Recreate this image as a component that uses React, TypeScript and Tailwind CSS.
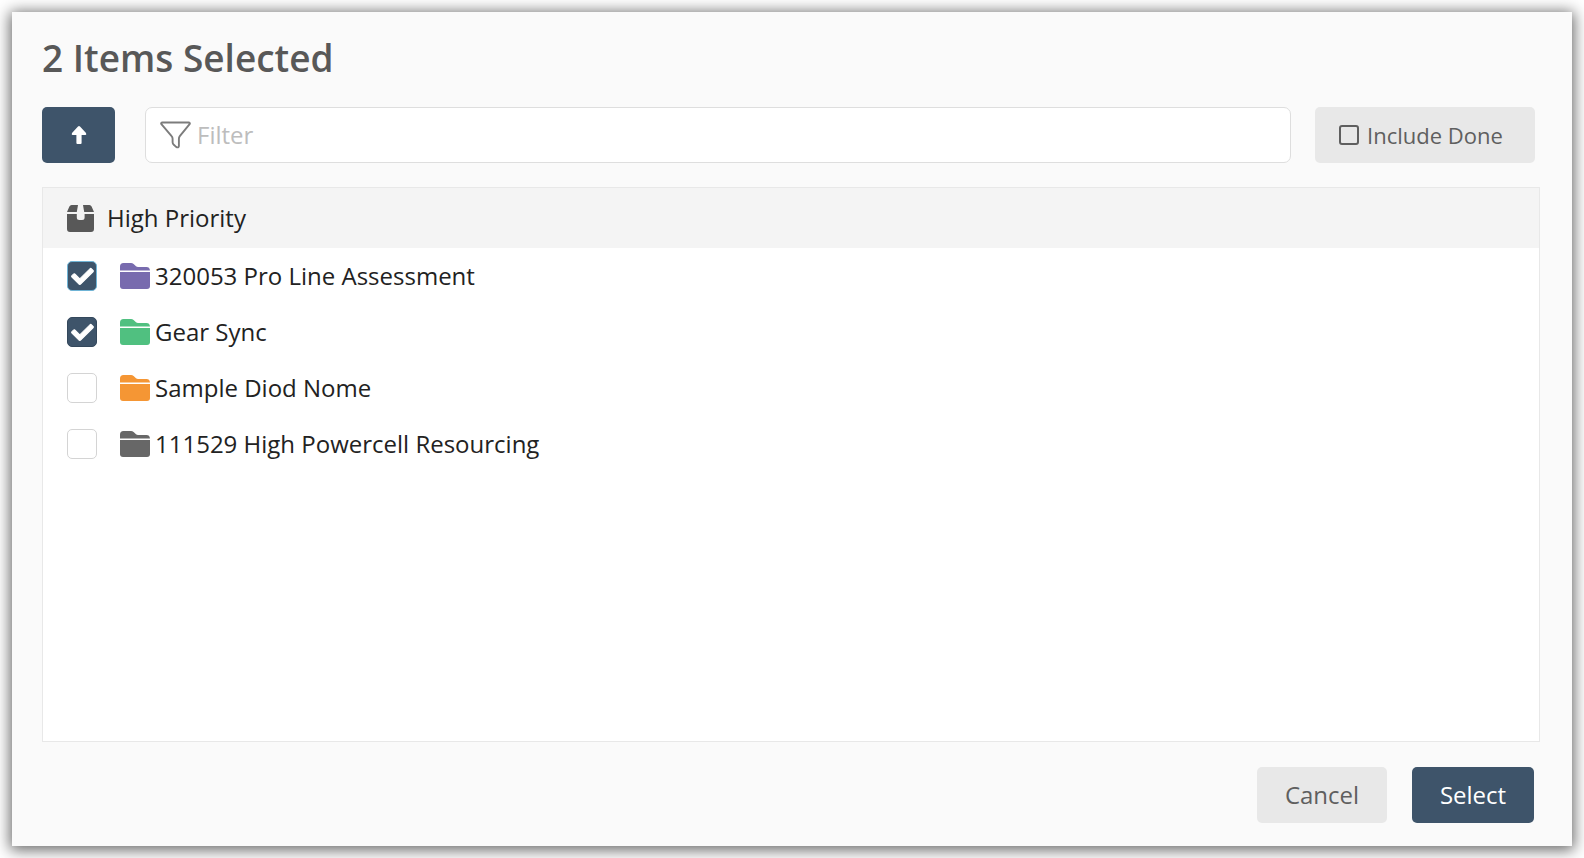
import { useState } from "react";

type Item = { id: string; name: string; color: string };

const ITEMS: Item[] = [
  { id: "pro-line", name: "320053 Pro Line Assessment", color: "text-[#786bae]" },
  { id: "gear-sync", name: "Gear Sync", color: "text-[#50c080]" },
  { id: "diod", name: "Sample Diod Nome", color: "text-[#f59634]" },
  { id: "powercell", name: "111529 High Powercell Resourcing", color: "text-[#676767]" },
];

function ArrowUpIcon() {
  return (
    <svg viewBox="0 0 16 18" className="h-[18px] w-4" fill="currentColor" aria-hidden="true">
      <path d="M8 0 Q8.5 0 9 .5 L15 7 Q15.8 8.8 14.5 9 H10.6 V17 Q10.6 18 9.6 18 H6.4 Q5.4 18 5.4 17 V9 H1.5 Q.2 8.8 1 7 L7 .5 Q7.5 0 8 0Z" />
    </svg>
  );
}

function FunnelIcon() {
  return (
    <svg viewBox="0 0 31 28" className="h-7 w-[31px]" fill="none" stroke="currentColor" strokeWidth="1.9" strokeLinejoin="round" aria-hidden="true">
      <path d="M2.2 1.5 H28.8 Q30.4 1.9 29.6 3.2 L19.8 15.2 Q18.9 16.3 18.9 17.8 V25 Q18.5 27 16.4 26.1 L13.8 23.8 Q12.6 22.8 12.6 21.3 V17.8 Q12.6 16.3 11.6 15.2 L1.4 3.2 Q.6 1.9 2.2 1.5Z" />
    </svg>
  );
}

function BoxIcon() {
  return (
    <svg viewBox="0 0 27 27" className="size-[27px]" fill="currentColor" aria-hidden="true">
      <path d="M4.6 0 H11 L9.8 7 H0 L2.4 1.5 Q3.1 0 4.6 0Z M16 0 H22.4 Q23.9 0 24.6 1.5 L27 7 H17.2Z" />
      <path d="M0 9 H9.8 V12.5 Q9.8 15 12.3 15 H15.1 Q17.6 15 17.6 12.5 V9 H27 V24 Q27 27 24 27 H3 Q0 27 0 24Z" />
    </svg>
  );
}

function FolderIcon({ color }: { color: string }) {
  return (
    <svg viewBox="0 0 30 26" className={`h-[26px] w-[30px] ${color}`} fill="currentColor" aria-hidden="true">
      <path d="M3.5 0 H11 Q12.5 0 13.6 1 L16 3.3 Q16.8 4 18 4 H26.5 Q29.6 4 30 7.4 H0 V3.5 Q0 0 3.5 0Z" />
      <path d="M0 9 H30 V23 Q30 26 27 26 H3 Q0 26 0 23Z" />
    </svg>
  );
}

function CheckIcon() {
  return (
    <svg viewBox="-16 -16 544 544" className="pointer-events-none col-start-1 row-start-1 hidden size-[23px] text-white peer-checked:block" fill="currentColor" stroke="currentColor" strokeWidth="24" aria-hidden="true">
      <path d="M173.898 439.404l-166.4-166.4c-9.997-9.997-9.997-26.206 0-36.204l36.203-36.204c9.997-9.998 26.207-9.998 36.204 0L192 312.69 432.095 72.596c9.997-9.997 26.207-9.997 36.204 0l36.203 36.204c9.997 9.997 9.997 26.206 0 36.204l-294.4 294.401c-9.998 9.997-26.207 9.997-36.204-.001z" />
    </svg>
  );
}

export default function App() {
  const [selected, setSelected] = useState<string[]>(["pro-line", "gear-sync"]);
  const [includeDone, setIncludeDone] = useState(false);
  const [filter, setFilter] = useState("");

  const toggle = (id: string) =>
    setSelected((prev) => (prev.includes(id) ? prev.filter((s) => s !== id) : [...prev, id]));

  const visible = ITEMS.filter((item) => item.name.toLowerCase().includes(filter.toLowerCase()));

  return (
    <div className="flex min-h-screen bg-white p-3 font-['Open_Sans','Noto_Sans',sans-serif] text-2xl leading-8 text-[#222222]">
      <main className="flex flex-1 flex-col bg-[#fafafa] pt-[22px] pr-8 pb-[23px] pl-[30px] shadow-[0_2px_14px_2px_rgba(0,0,0,0.6)]">
        <h1 className="text-[37px] leading-[48px] font-semibold text-[#585858]">{selected.length} Items Selected</h1>

        <div className="mt-[25px] mr-[5px] flex h-14">
          <button type="button" aria-label="Go up" className="flex w-[73px] items-center justify-center rounded-[5px] bg-[#3e546a] text-white">
            <ArrowUpIcon />
          </button>
          <label className="ml-[30px] flex flex-1 items-center gap-1.5 rounded-[7px] border border-[#dedede] bg-white px-3.5 text-[#7c7c7c]">
            <FunnelIcon />
            <input
              type="text"
              aria-label="Filter"
              placeholder="Filter"
              value={filter}
              onChange={(e) => setFilter(e.target.value)}
              className="min-w-0 flex-1 bg-transparent text-[#222222] outline-none placeholder:text-[#bdbdbd]"
            />
          </label>
          <label className="ml-6 flex w-[220px] items-center gap-2 rounded-[5px] bg-[#e8e8e8] pl-6 text-[22px] text-[#5f5f5f]">
            <input
              type="checkbox"
              checked={includeDone}
              onChange={(e) => setIncludeDone(e.target.checked)}
              className="size-5 appearance-none rounded-[3px] border-2 border-[#5f5f5f] checked:bg-[#5f5f5f]"
            />
            Include Done
          </label>
        </div>

        <section className="mt-6 flex-1 border border-[#e8e8e8] bg-white">
          <h2 className="flex h-[60px] items-center gap-[13px] bg-[#f4f4f4] pl-6">
            <span className="text-[#585858]">
              <BoxIcon />
            </span>
            High Priority
          </h2>
          <ul>
            {visible.map((item, index) => (
              <li key={item.id}>
                <label className="flex h-14 items-center pl-6">
                  <span className="grid size-[30px] place-items-center">
                    <input
                      type="checkbox"
                      autoFocus={index === 0}
                      checked={selected.includes(item.id)}
                      onChange={() => toggle(item.id)}
                      className="peer col-start-1 row-start-1 size-[30px] appearance-none rounded-[5px] border border-[#d4d4d4] bg-white outline-none checked:border-[#34485c] checked:bg-[#3e546a] focus:border-[#6fb4d6]"
                    />
                    <CheckIcon />
                  </span>
                  <span className="mr-[5px] ml-[23px]">
                    <FolderIcon color={item.color} />
                  </span>
                  {item.name}
                </label>
              </li>
            ))}
          </ul>
        </section>

        <footer className="mt-[25px] mr-1.5 flex h-14 justify-end gap-[25px]">
          <button type="button" className="w-[130px] rounded-[5px] bg-[#e8e8e8] text-[#5f5f5f]">Cancel</button>
          <button type="button" className="w-[122px] rounded-[5px] bg-[#3e546a] text-white">Select</button>
        </footer>
      </main>
    </div>
  );
}
